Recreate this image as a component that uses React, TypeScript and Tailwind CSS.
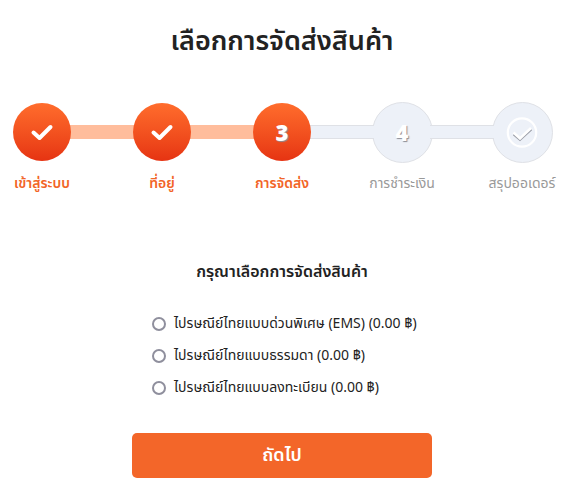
import React, { Fragment, useState } from 'react';

interface Step {
  label: string;
  mark: 'check' | 'finish' | string;
  active: boolean;
}

const STEPS: Step[] = [
  { label: 'เข้าสู่ระบบ', mark: 'check', active: true },
  { label: 'ที่อยู่', mark: 'check', active: true },
  { label: 'การจัดส่ง', mark: '3', active: true },
  { label: 'การชำระเงิน', mark: '4', active: false },
  { label: 'สรุปออเดอร์', mark: 'finish', active: false },
];

const SHIPPING_OPTIONS = [
  { id: 'ems', label: 'ไปรษณีย์ไทยแบบด่วนพิเศษ (EMS) (0.00 ฿)' },
  { id: 'regular', label: 'ไปรษณีย์ไทยแบบธรรมดา (0.00 ฿)' },
  { id: 'registered', label: 'ไปรษณีย์ไทยแบบลงทะเบียน (0.00 ฿)' },
];

const StepMark: React.FC<{ mark: string }> = ({ mark }) => {
  if (mark === 'check') {
    return (
      <svg width="24" height="20" viewBox="0 0 24 20" fill="none" aria-hidden="true">
        <path d="M3.5 10.5 L9.5 16 L20.5 5" stroke="#fff" strokeWidth="4" strokeLinecap="round" strokeLinejoin="round" />
      </svg>
    );
  }
  if (mark === 'finish') {
    return (
      <svg width="34" height="34" viewBox="0 0 34 34" fill="none" aria-hidden="true">
        <circle cx="17" cy="17.5" r="14.2" stroke="#fff" strokeWidth="2.2" />
        <path d="M8.5 19.5 L15 25 L26.5 14.5" stroke="#9a9da6" strokeWidth="1.8" />
        <path d="M8.5 17.5 L15 23.5 L26 13" stroke="#fff" strokeWidth="2.5" />
      </svg>
    );
  }
  return (
    <span className="font-[Open_Sans,sans-serif] text-[22px] leading-8 font-extrabold [text-shadow:1px_1px_1px_#8d8d94]">
      {mark}
    </span>
  );
};

const App: React.FC = () => {
  const [shipping, setShipping] = useState<string>('');

  return (
    <main className="bg-white pt-[22px] pr-5 pb-4 font-[Noto_Sans_Thai,Noto_Sans,sans-serif] text-[#222]">
      <h1 className="text-center text-[27px] leading-10 font-semibold">เลือกการจัดส่งสินค้า</h1>

      <ol className="mt-[38px] flex px-3">
        {STEPS.map((step, i) => (
          <Fragment key={step.label}>
            {i > 0 && (
              <li
                aria-hidden="true"
                className={
                  step.active
                    ? 'z-10 -mx-0.5 mt-[25px] h-3.5 flex-1 bg-[#ffbd9c]'
                    : 'z-10 -mx-0.5 mt-[25px] h-3.5 flex-1 border-y border-[#dfe1e6] bg-[#edf1f8]'
                }
              />
            )}
            <li className={step.active ? 'z-20 flex w-15 flex-col items-center' : 'z-0 flex w-15 flex-col items-center'}>
              <div className="flex h-16 items-center">
                <div
                  className={
                    step.active
                      ? 'flex size-[58px] items-center justify-center rounded-full bg-linear-to-b from-[#ff6c2c] to-[#e63312] text-white'
                      : 'flex size-[61px] items-center justify-center rounded-full border border-[#dfe1e6] bg-[#edf1f8] text-white'
                  }
                >
                  <StepMark mark={step.mark} />
                </div>
              </div>
              <span
                className={
                  step.active
                    ? 'mt-2 text-sm leading-6 font-semibold whitespace-nowrap text-[#f26527]'
                    : 'mt-2 text-sm leading-6 whitespace-nowrap text-[#999]'
                }
              >
                {step.label}
              </span>
            </li>
          </Fragment>
        ))}
      </ol>

      <form onSubmit={(e) => e.preventDefault()} className="mx-auto mt-16 w-full max-w-[300px]">
        <fieldset>
          <legend className="w-full text-center text-base leading-6 font-semibold whitespace-nowrap">
            กรุณาเลือกการจัดส่งสินค้า
          </legend>
          <div className="mt-6 pl-5">
            {SHIPPING_OPTIONS.map((option) => (
              <label key={option.id} className="flex h-8 items-center gap-2 text-sm whitespace-nowrap">
                <input
                  type="radio"
                  name="shipping"
                  value={option.id}
                  checked={shipping === option.id}
                  onChange={() => setShipping(option.id)}
                  className="size-3.5 shrink-0 appearance-none rounded-full border-2 border-[#8f8f9d] checked:border-4 checked:border-[#f26527]"
                />
                {option.label}
              </label>
            ))}
          </div>
        </fieldset>
        <button type="submit" className="mt-[29px] h-[45px] w-full rounded-[5px] bg-[#f36629] text-lg font-semibold text-white">
          ถัดไป
        </button>
      </form>
    </main>
  );
};

export default App;
